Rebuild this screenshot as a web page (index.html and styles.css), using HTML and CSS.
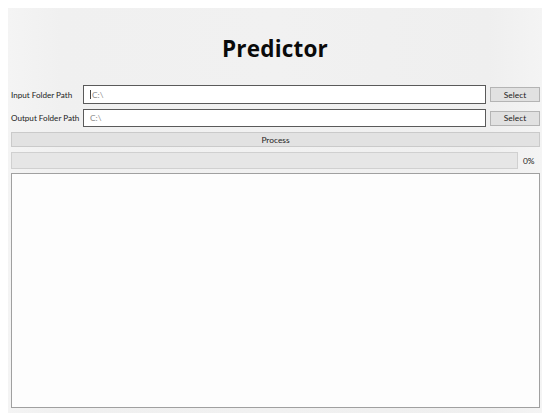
FILE: index.html
```html
<!DOCTYPE html>
<html>
<head>
<meta charset="utf-8">
<link rel="stylesheet" href="styles.css">
</head>
<body>
<div class="window">
  <div class="header"><h1 class="title">Predictor</h1></div>
  <div class="content">
    <div class="path-row row-first">
      <span class="label">Input Folder Path</span>
      <div class="field"><span class="caret"></span><span class="value">C:\</span></div>
      <button class="btn select-btn">Select</button>
    </div>
    <div class="path-row">
      <span class="label">Output Folder Path</span>
      <div class="field"><span class="value">C:\</span></div>
      <button class="btn select-btn">Select</button>
    </div>
    <button class="btn process-btn">Process</button>
    <div class="progress-row">
      <div class="progress"></div>
      <span class="percent">0%</span>
    </div>
    <div class="log"></div>
  </div>
</div>
</body>
</html>
```

FILE: styles.css
```css
html, body {
  margin: 0;
  padding: 0;
  background: #ffffff;
}
body {
  font-family: Lato, "Noto Sans", sans-serif;
  color: #1a1a1a;
}
.window {
  margin: 8px 8px 0 8px;
  width: 534px;
  height: 405px;
  background: linear-gradient(to right, #f4f4f4 0%, #f0f0f0 10%, #f1f1f1 50%, #efefef 90%, #f4f4f4 100%);
  display: flex;
  flex-direction: column;
  box-sizing: border-box;
}
.header {
  height: 77px;
  display: flex;
  align-items: center;
  justify-content: center;
  padding-top: 4px;
  box-sizing: border-box;
}
.title {
  margin: 0;
  font-family: "Open Sans", sans-serif;
  font-weight: 700;
  font-size: 22.5px;
  letter-spacing: 0.2px;
  color: #0a0a0a;
}
.content {
  display: flex;
  flex-direction: column;
  padding: 0 2px 5px 3px;
  flex: 1;
  min-height: 0;
}
.path-row {
  display: grid;
  grid-template-columns: 72px 1fr 50px;
  align-items: center;
  height: 18px;
  margin-bottom: 5px;
}
.row-first {
  height: 19px;
}
.label {
  font-size: 8.1px;
  color: #222;
  white-space: nowrap;
}
.field {
  height: 100%;
  margin-right: 4px;
  box-sizing: border-box;
  background: #fff;
  border: 1.5px solid #5a5a5a;
  display: flex;
  align-items: center;
  padding-left: 6px;
}
.value {
  font-size: 8.4px;
  color: #8a8a8a;
}
.caret {
  width: 1px;
  height: 9px;
  background: #444;
  margin-right: 1px;
}
.btn {
  font-family: Lato, "Noto Sans", sans-serif;
  font-size: 8.4px;
  color: #222;
  background: #e1e1e1;
  border: 1px solid #b4b4b4;
  padding: 0;
  box-sizing: border-box;
}
.select-btn {
  height: 15px;
}
.process-btn {
  height: 15px;
  width: 100%;
  margin-bottom: 5px;
  background: #e2e2e2;
  border-color: #cacaca;
}
.progress-row {
  display: flex;
  align-items: center;
  height: 17px;
  margin-bottom: 4px;
}
.progress {
  width: 507px;
  height: 100%;
  box-sizing: border-box;
  background: #e6e6e6;
  border: 1px solid #d0d0d0;
}
.percent {
  font-size: 8.4px;
  margin-left: 5px;
  color: #222;
}
.log {
  flex: 1;
  background: #fdfdfd;
  border: 1.5px solid #a0a0a0;
  box-sizing: border-box;
}
```
